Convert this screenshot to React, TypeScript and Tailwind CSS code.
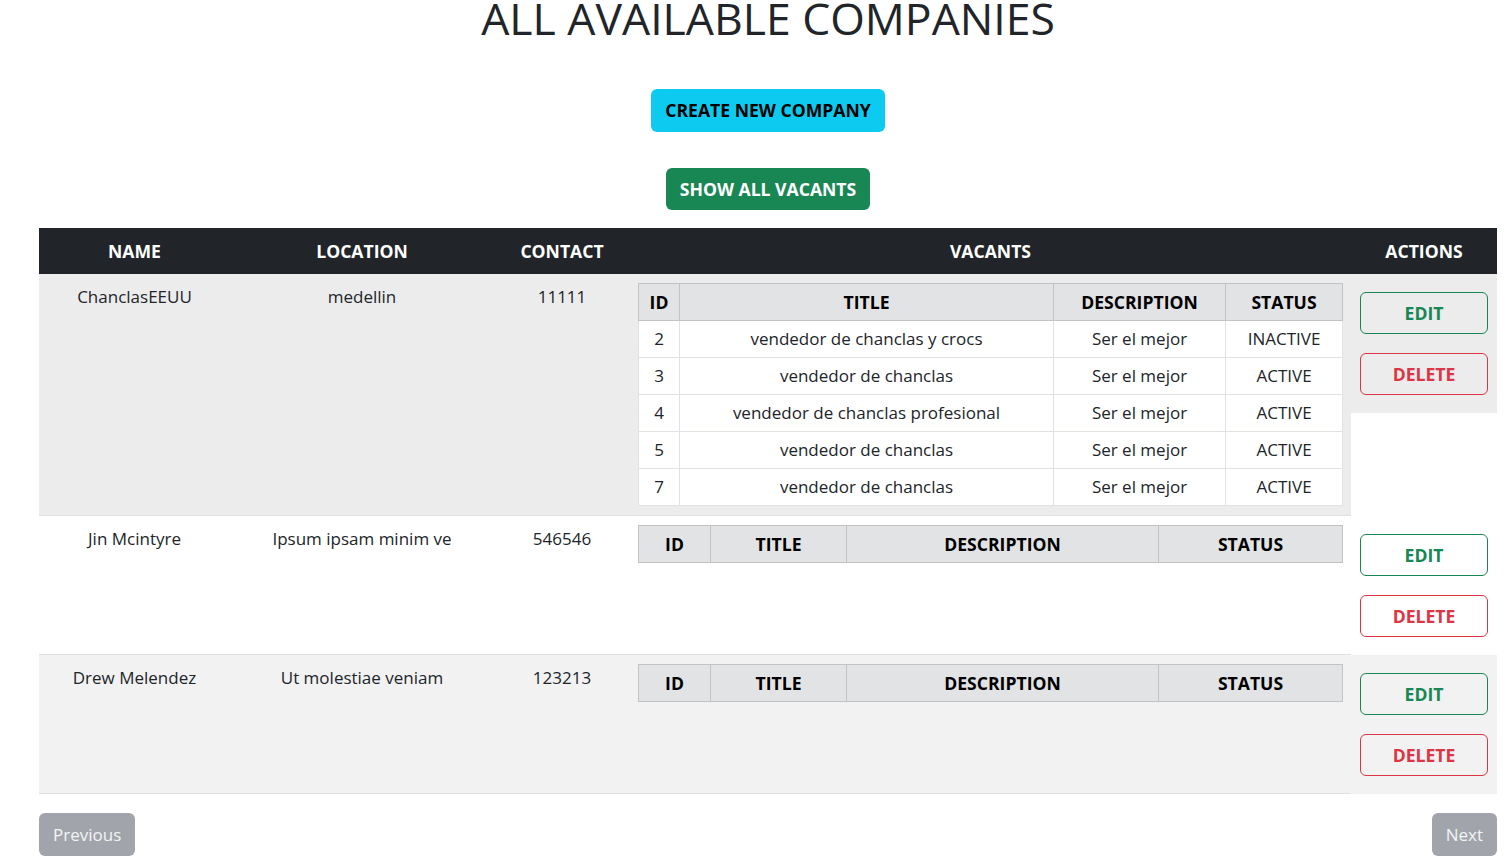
import React from "react";

type Vacant = { id: number; title: string; description: string; status: string };
type Company = { name: string; location: string; contact: string; vacants: Vacant[]; bg: string };

const companies: Company[] = [
  {
    name: "ChanclasEEUU",
    location: "medellin",
    contact: "11111",
    bg: "bg-[#ececec]",
    vacants: [
      { id: 2, title: "vendedor de chanclas y crocs", description: "Ser el mejor", status: "INACTIVE" },
      { id: 3, title: "vendedor de chanclas", description: "Ser el mejor", status: "ACTIVE" },
      { id: 4, title: "vendedor de chanclas profesional", description: "Ser el mejor", status: "ACTIVE" },
      { id: 5, title: "vendedor de chanclas", description: "Ser el mejor", status: "ACTIVE" },
      { id: 7, title: "vendedor de chanclas", description: "Ser el mejor", status: "ACTIVE" },
    ],
  },
  { name: "Jin Mcintyre", location: "Ipsum ipsam minim ve", contact: "546546", bg: "bg-white", vacants: [] },
  { name: "Drew Melendez", location: "Ut molestiae veniam", contact: "123213", bg: "bg-[#f2f2f2]", vacants: [] },
];

function VacantsTable({ vacants }: { vacants: Vacant[] }) {
  const full = vacants.length > 0;
  const widths = full ? ["w-[41px]", "w-[374px]", "w-[172px]", "w-[117px]"] : ["w-[72px]", "w-[136px]", "w-[312px]", "w-[184px]"];
  const heads = ["ID", "TITLE", "DESCRIPTION", "STATUS"];
  return (
    <table className="w-[704px] table-fixed border-collapse">
      <thead>
        <tr className="h-[37px] bg-[#e2e3e5]">
          {heads.map((h, i) => (
            <th key={h} className={`${widths[i]} border border-[#c2c3c5] font-bold text-black text-[17.6px] px-1`}>
              {h}
            </th>
          ))}
        </tr>
      </thead>
      <tbody>
        {vacants.map((v) => (
          <tr key={v.id} className="h-[37px] bg-white">
            <td className="border border-[#dee2e6] text-center">{v.id}</td>
            <td className="border border-[#dee2e6] text-center">{v.title}</td>
            <td className="border border-[#dee2e6] text-center">{v.description}</td>
            <td className="border border-[#dee2e6] text-center">{v.status}</td>
          </tr>
        ))}
      </tbody>
    </table>
  );
}

export default function App() {
  return (
    <div className="min-h-screen bg-white text-[#212529] font-['Open_Sans','Liberation_Sans',sans-serif] text-[17px] leading-[1.55] overflow-hidden">
      <div className="ml-[39px] w-[1458px]">
        <h1 className="mt-[-9px] text-center text-[44.5px] leading-[1.2] font-medium">
          ALL AVAILABLE COMPANIES
        </h1>

        <div className="flex flex-col items-center text-[17.6px]">
          <button className="mt-[45px] h-[43px] px-[14px] rounded-[6px] bg-[#0dcaf0] text-black font-bold">
            CREATE NEW COMPANY
          </button>
          <button className="mt-[36px] h-[42px] px-[14px] rounded-[6px] bg-[#198754] text-white font-bold">
            SHOW ALL VACANTS
          </button>
        </div>

        <div className="mt-[18px]">
          <div className="flex h-[46px] items-center bg-[#212529] text-white font-bold text-center text-[17.6px]">
            <div className="w-[191px]">NAME</div>
            <div className="w-[264px]">LOCATION</div>
            <div className="w-[136px]">CONTACT</div>
            <div className="w-[721px]">VACANTS</div>
            <div className="w-[146px]">ACTIONS</div>
          </div>

          {companies.map((c) => (
            <div key={c.name} className="flex items-stretch">
              <div className={`flex w-[1312px] border-b border-[#dee2e6] ${c.bg}`}>
                <div className="w-[191px] pt-[10px] text-center">{c.name}</div>
                <div className="w-[264px] pt-[10px] text-center">{c.location}</div>
                <div className="w-[136px] pt-[10px] text-center">{c.contact}</div>
                <div className="w-[721px] pl-[8px] pt-[9px] pb-[9px]">
                  <VacantsTable vacants={c.vacants} />
                </div>
              </div>
              <div className={`self-start w-[146px] h-[139px] flex flex-col items-center pt-[18px] gap-[19px] text-[17.6px] ${c.bg}`}>
                <button className="w-[128px] h-[42px] rounded-[6px] border border-[#198754] text-[#198754] font-bold">
                  EDIT
                </button>
                <button className="w-[128px] h-[42px] rounded-[6px] border border-[#dc3545] text-[#dc3545] font-bold">
                  DELETE
                </button>
              </div>
            </div>
          ))}
        </div>

        <div className="mt-[19px] flex justify-between">
          <button className="h-[43px] px-[14px] rounded-[6px] bg-[#a1a5ab] text-[#f3f4f5]">Previous</button>
          <button className="h-[43px] px-[14px] rounded-[6px] bg-[#a1a5ab] text-[#f3f4f5]">Next</button>
        </div>
      </div>
    </div>
  );
}
